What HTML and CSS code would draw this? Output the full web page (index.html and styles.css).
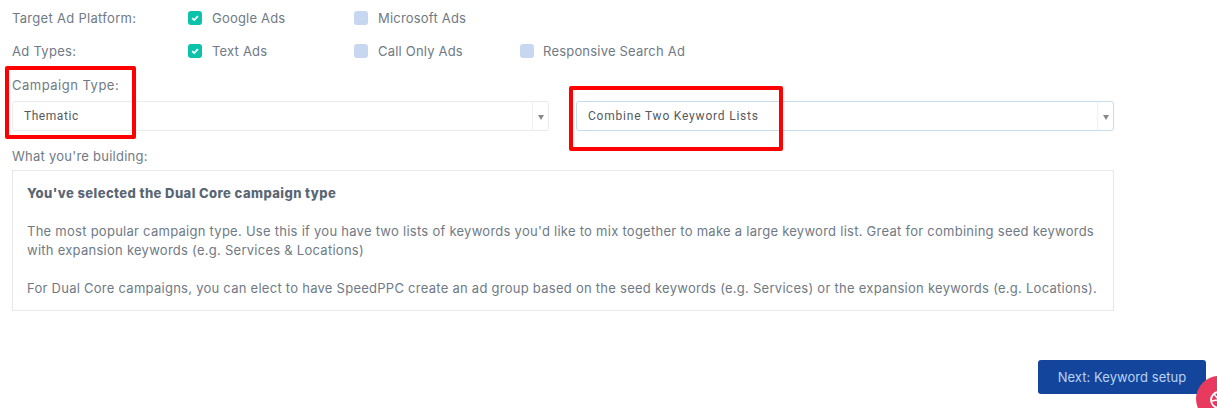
FILE: index.html
```html
<!DOCTYPE html>
<html lang="en">
<head>
<meta charset="utf-8">
<title>Campaign setup</title>
<link rel="stylesheet" href="styles.css">
</head>
<body>
<main class="page">
  <div class="check-row check-row-first">
    <span class="label">Target Ad Platform:</span>
    <span class="option"><span class="box on"><svg viewBox="0 0 14 14" width="14" height="14"><path d="M4.2 7.2 6.2 9.1 9.9 5.2" fill="none" stroke="#fff" stroke-width="1.8"/></svg></span>Google Ads</span>
    <span class="option"><span class="box"></span>Microsoft Ads</span>
  </div>
  <div class="check-row">
    <span class="label">Ad Types:</span>
    <span class="option"><span class="box on"><svg viewBox="0 0 14 14" width="14" height="14"><path d="M4.2 7.2 6.2 9.1 9.9 5.2" fill="none" stroke="#fff" stroke-width="1.8"/></svg></span>Text Ads</span>
    <span class="option"><span class="box"></span>Call Only Ads</span>
    <span class="option option-tight"><span class="box"></span>Responsive Search Ad</span>
  </div>
  <div class="label campaign-label">Campaign Type:</div>
  <div class="selects">
    <div class="select"><span class="select-text select-text-short">Thematic</span><span class="select-arrow"></span></div>
    <div class="select select-focus"><span class="select-text">Combine Two Keyword Lists</span><span class="select-arrow"></span></div>
  </div>
  <div class="label building-label">What you're building:</div>
  <section class="info">
    <p class="info-title">You've selected the Dual Core campaign type</p>
    <p class="info-para">The most popular campaign type. Use this if you have two lists of keywords you'd like to mix together to make a large keyword list. Great for combining seed keywords with expansion keywords (e.g. Services &amp; Locations)</p>
    <p class="info-para">For Dual Core campaigns, you can elect to have SpeedPPC create an ad group based on the seed keywords (e.g. Services) or the expansion keywords (e.g. Locations).</p>
  </section>
  <div class="actions"><button class="next" type="button">Next: Keyword setup</button></div>
</main>
<div class="mark mark-left"></div>
<div class="mark mark-right"></div>
<div class="help"><svg viewBox="0 0 46 46" width="46" height="46"><circle cx="23" cy="24" r="8" fill="none" stroke="#fff" stroke-width="1.8"/><path d="M18 18 28 30M16 25 30 22" fill="none" stroke="#fff" stroke-width="1.4"/></svg></div>
</body>
</html>
```
FILE: styles.css
```css
* { box-sizing: border-box; }
html, body { margin: 0; height: 100%; overflow: hidden; background: #fff; }
body { position: relative; font-family: Inter, "Open Sans", sans-serif; font-size: 13px; color: #6c757d; }
.page { padding: 0 11px 0 12px; }
.check-row { display: grid; grid-template-columns: 176px 166px 166px 1fr; align-items: center; height: 20px; }
.check-row-first { margin-top: 8px; margin-bottom: 13px; }
.label, .option { letter-spacing: 0.3px; line-height: 20px; white-space: nowrap; color: #6f7a85; }
.option { display: flex; align-items: center; gap: 10px; letter-spacing: 0.2px; }
.option-tight { gap: 9px; }
.box { display: block; flex: none; width: 14px; height: 14px; border-radius: 3px; background: #c6d7ef; }
.box svg { display: block; }
.box.on { background: #0cc2aa; }
.campaign-label { margin-top: 14px; height: 20px; letter-spacing: 0.5px; }
.selects { display: grid; grid-template-columns: 537px 538px; gap: 27px; margin-top: 6px; }
.select { display: flex; align-items: center; height: 30px; border: 1px solid #e9ecef; border-radius: 3px; background: #fff; }
.select-focus { border-color: #c9dcec; }
.select-text { flex: 1; padding-left: 11px; font-family: Roboto, sans-serif; font-size: 12px; letter-spacing: 0.8px; color: #55595c; }
.select-text-short { letter-spacing: 0.55px; }
.select-arrow { position: relative; width: 16px; align-self: stretch; border-left: 1px solid #eef0f2; }
.select-arrow::after { content: ""; position: absolute; left: 5px; top: 13px; border-left: 3px solid transparent; border-right: 3px solid transparent; border-top: 5px solid #888; }
.building-label { margin-top: 15px; height: 20px; letter-spacing: 0.25px; }
.info { width: 1102px; height: 141px; margin-top: 4px; border: 1px solid #e5e7e9; padding: 13px 14px 0; line-height: 19px; }
.info p { margin: 0; }
.info-title { font-weight: 800; color: #5a6673; letter-spacing: 0.42px; }
.info-para { margin-top: 19px !important; color: #6f7a85; letter-spacing: 0.262px; }
.actions { display: flex; justify-content: flex-end; margin-top: 49px; }
.next { width: 168px; height: 34px; border: 0; border-radius: 3px; background: #14459c; color: #b9d3f2; font: inherit; letter-spacing: 0.05px; padding: 0; }
.mark { position: absolute; border: 4px solid #f00; border-radius: 2px; pointer-events: none; }
.mark-left { left: 5px; top: 66px; width: 131px; height: 73px; }
.mark-right { left: 569px; top: 86px; width: 214px; height: 65px; }
.help { position: absolute; left: 1196px; top: 376px; width: 46px; height: 46px; border-radius: 50%; background: #e8395f; }
.help svg { display: block; }
```
